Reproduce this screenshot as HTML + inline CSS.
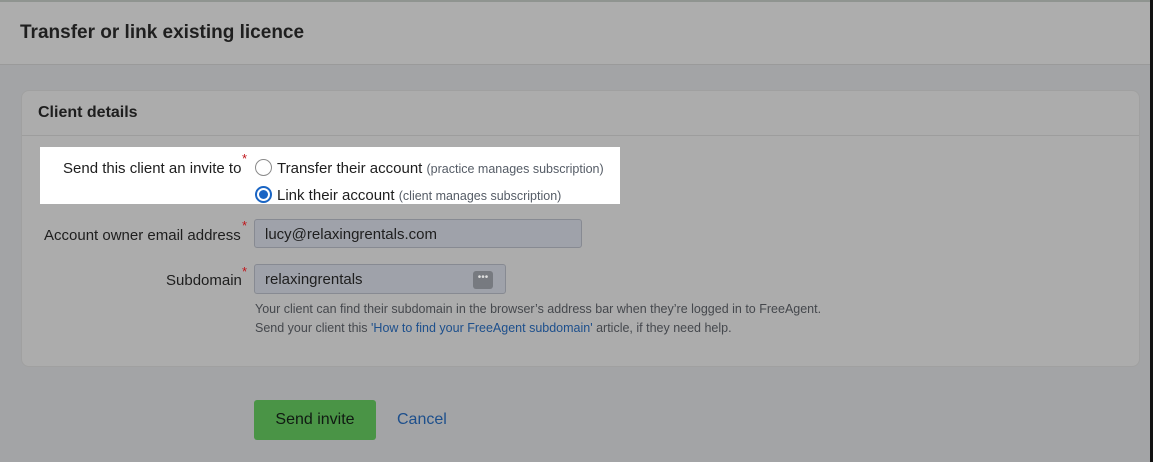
<!DOCTYPE html>
<html><head><style>
*{margin:0;padding:0;box-sizing:border-box}
body{width:1153px;height:462px;overflow:hidden;background:#a3a4a6;font-family:"Liberation Sans",sans-serif;position:relative;color:#1e1e1e}
.top{position:absolute;left:0;top:0;width:1150px;height:65px;background:#adadad;border-top:2px solid #8f9490;border-bottom:1px solid #9a9a9a}
.top h1{position:absolute;left:20px;top:20px;font-size:19px;font-weight:bold;color:#1f1f1f}
.edge{position:absolute;right:0;top:0;width:3px;height:462px;background:#111}
.card{position:absolute;left:21px;top:90px;width:1119px;height:277px;background:#acacac;border-radius:8px;border:1px solid #a0a0a0}
.card .hd{height:45px;border-bottom:1px solid #9d9d9d;padding:13px 16px;font-size:16px;font-weight:bold}
.hl{position:absolute;left:40px;top:147px;width:580px;height:57px;background:#fff}
.t{position:absolute;font-size:15px;white-space:nowrap}
.s{font-size:12.5px;color:#555c66}
.r{color:#c0141a;font-size:13px;position:absolute}
.radio{position:absolute;width:17px;height:17px;border-radius:50%;border:1px solid #8a8a8a;background:#fff}
.radio.on{border:2px solid #1a65c4}
.radio.on::after{content:"";position:absolute;left:2px;top:2px;width:9px;height:9px;border-radius:50%;background:#1a65c4}
.in{position:absolute;background:#9fa2aa;border:1px solid #878a92;border-radius:3px;font-size:15px;padding:6px 0 0 10px}
.help{position:absolute;left:255px;font-size:12.5px;color:#45484d}
.btn{position:absolute;left:254px;top:400px;width:122px;height:40px;background:#4a9446;border-radius:3px;font-size:16px;color:#101a12;text-align:center;line-height:40px}
</style></head><body>
<div class="top"><h1>Transfer or link existing licence</h1></div>
<div class="edge"></div>
<div class="card"><div class="hd">Client details</div></div>
<div class="hl"></div>
<div class="t" style="left:63px;top:160px">Send this client an invite to</div><span class="r" style="left:242px;top:151px">*</span>
<div class="radio" style="left:255px;top:159px"></div>
<div class="t" style="left:277px;top:160px">Transfer their account <span class="s">(practice manages subscription)</span></div>
<div class="radio on" style="left:255px;top:186px"></div>
<div class="t" style="left:277px;top:187px">Link their account <span class="s">(client manages subscription)</span></div>
<div class="t" style="left:44px;top:227px">Account owner email address</div><span class="r" style="left:242px;top:218px">*</span>
<div class="in" style="left:254px;top:219px;width:328px;height:29px">lucy@relaxingrentals.com</div>
<div class="t" style="left:166px;top:272px">Subdomain</div><span class="r" style="left:242px;top:264px">*</span>
<div class="in" style="left:254px;top:264px;width:252px;height:30px">relaxingrentals<span style="position:absolute;right:12px;top:6px;width:20px;height:18px;background:#777a80;border-radius:3px;color:#ddd;font-size:10px;text-align:center;line-height:14px">•••</span></div>
<div class="help" style="top:302px">Your client can find their subdomain in the browser’s address bar when they’re logged in to FreeAgent.</div>
<div class="help" style="top:321px">Send your client this <span style="color:#1d4f8c">'How to find your FreeAgent subdomain'</span> article, if they need help.</div>
<div class="btn">Send invite</div>
<div class="t" style="left:397px;top:411px;font-size:16px;color:#1d4f8c">Cancel</div>
</body></html>
